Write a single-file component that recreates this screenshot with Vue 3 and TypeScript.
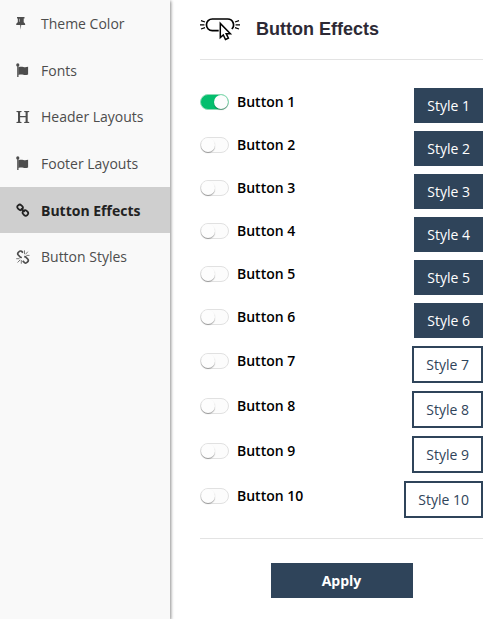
<script setup lang="ts">
import { ref } from 'vue'

type IconName = 'pin' | 'flag' | 'header' | 'link' | 'unlink'
interface MenuItem { label: string; icon: IconName }

const menu: MenuItem[] = [
  { label: 'Theme Color', icon: 'pin' },
  { label: 'Fonts', icon: 'flag' },
  { label: 'Header Layouts', icon: 'header' },
  { label: 'Footer Layouts', icon: 'flag' },
  { label: 'Button Effects', icon: 'link' },
  { label: 'Button Styles', icon: 'unlink' },
]
const activeItem = ref('Button Effects')
const selected = ref(1)
const effects = Array.from({ length: 10 }, (_, i) => ({ id: i + 1, outline: i >= 6 }))
</script>

<template>
  <div class="page">
    <nav class="sidebar">
      <a
        v-for="item in menu"
        :key="item.label"
        class="menu-item"
        :class="{ active: item.label === activeItem }"
        @click="activeItem = item.label"
      >
        <svg class="menu-icon" viewBox="0 0 14 14" fill="currentColor">
          <path v-if="item.icon === 'pin'" d="M1 1h7.500v1.500H7.700v3.800c.9.500 1.500 1.400 1.500 2.700H5.200L4.700 13.800 4.200 9H.2c0-1.300.6-2.200 1.600-2.700V2.500H1zM3.300 2.700v3.100h.5V2.700z" fill-rule="evenodd" />
          <g v-else-if="item.icon === 'flag'">
            <circle cx="1.800" cy="1.900" r="1.600" />
            <path d="M1.200 3h1.300v11H1.200z" />
            <path d="M2.300 4.200c2.100-.7 3.600-.6 5-.2 1.500.4 2.800.3 4.800-.2v7.700c-1.900.6-3.300.7-4.800.3-1.600-.4-3.200-.3-5 .1z" />
          </g>
          <path v-else-if="item.icon === 'header'" d="M.5 1h5v1l-1.400.3v3.800h5.500V2.300L8.200 2V1h5v1l-1.500.3v9.400l1.500.3v1h-5v-1l1.400-.3V7.200H4.100v4.500l1.400.3v1h-5v-1l1.500-.3V2.300L.5 2z" />
          <g v-else-if="item.icon === 'link'" fill="none" stroke="currentColor" stroke-width="1.750">
            <rect x="1.300" y="2" width="5.600" height="4.700" rx="2.200" transform="rotate(45 4.100 4.350)" />
            <rect x="6.600" y="7.600" width="5.600" height="4.700" rx="2.200" transform="rotate(45 9.400 9.950)" />
            <path d="M5 5.300l3.600 3.600" />
          </g>
          <g v-else fill="none" stroke="currentColor">
            <path stroke-width="1.700" d="M7 2.700L5.500 1.300Q4.200.5 2.800 1.800 1 3.300 2.100 4.800l2.300 2.500 1.500.2M6.700 10.900l1.800 1.700q1.300 1 2.800-.4 1.700-1.500.6-3L9.600 6.800 8.200 6.600" />
            <path stroke-width=".75" d="M8.500 4.100V.4M9.500 4.300l2.300-2.600M10.300 5.400h3.200M.2 8.700h3.300M4.200 9.800L1.600 12.500M5.300 10v3.700" />
          </g>
        </svg>
        <span>{{ item.label }}</span>
      </a>
    </nav>

    <main class="panel">
      <header class="panel-header">
        <svg class="logo" viewBox="0 0 40 26" fill="none" stroke="#000">
          <path stroke-width="1.700" d="M18.700 14.700H12.300a5.850 5.850 0 0 1 0-11.700h15.400a5.850 5.850 0 0 1 4.100 10" />
          <path stroke-width="1.300" d="M1 4.700l4 1.300M0 8.900h4.400M1 13l4-1.300M39 4.700l-4 1.300M40 8.900h-4.400M39 13l-4-1.300" />
          <path fill="#fff" stroke-width="1.500" stroke-linejoin="miter" d="M20.300 7.400v14.200l3-2.600 2.200 4.500 2.900-1.400-2.200-4.400h4.200z" />
        </svg>
        <h1>Button Effects</h1>
      </header>

      <div class="effects">
        <div v-for="effect in effects" :key="effect.id" class="effect-row">
          <label class="option" :class="{ 'option-outline': effect.outline }">
            <input v-model="selected" type="radio" name="effect" :value="effect.id">
            <span class="toggle" :class="{ on: selected === effect.id }"></span>
            <span class="option-name">Button {{ effect.id }}</span>
          </label>
          <button class="style-button" :class="{ outline: effect.outline }">Style {{ effect.id }}</button>
        </div>
      </div>

      <footer class="panel-footer">
        <button class="apply">Apply</button>
      </footer>
    </main>
  </div>
</template>

<style>
body {
  background: #fff;
  overflow: hidden;
}
</style>

<style scoped>
.page {
  display: flex;
  height: 619px;
  font-family: "Open Sans", "Noto Sans", sans-serif;
  font-size: 14px;
}
.sidebar {
  flex: 0 0 170px;
  box-sizing: border-box;
  padding-top: .15px;
  background: #f9f9f9;
  box-shadow: 1px 1px 3px rgba(0, 0, 0, .45);
}
.menu-item {
  display: flex;
  align-items: center;
  box-sizing: border-box;
  height: 46.670px;
  padding-left: 16px;
  color: #4d4d4d;
  cursor: pointer;
}
.menu-item.active {
  background: #cfcfcf;
  color: #222;
  font-weight: 700;
}
.menu-icon {
  width: 14px;
  height: 14px;
  margin-right: 11px;
}
.panel {
  flex: 1;
  padding: 0 10px 0 30px;
}
.panel-header {
  display: flex;
  align-items: center;
  box-sizing: border-box;
  height: 60px;
  padding-bottom: 2px;
  border-bottom: 1px solid #e3e3e3;
}
.logo {
  width: 40px;
  height: 26px;
  margin-top: 1px;
  margin-right: 16px;
}
h1 {
  margin: 0;
  color: #2d2a35;
  font: 700 18px/24px "Liberation Sans", Arial, sans-serif;
}
.effects {
  display: flex;
  flex-direction: column;
  gap: 8px;
  padding: 28px 0 20px;
}
.effect-row {
  display: flex;
  justify-content: space-between;
  align-items: flex-start;
}
.option {
  display: flex;
  align-items: center;
  height: 28px;
  color: #000;
  font-weight: 600;
  cursor: pointer;
}
.option-outline {
  height: 30px;
}
.option-name {
  line-height: 18px;
}
.option input {
  display: none;
}
.toggle {
  display: flex;
  box-sizing: border-box;
  width: 29px;
  height: 16px;
  margin-right: 8px;
  border: 1px solid #e1e1e1;
  border-radius: 8px;
  background: #fcfcfc;
}
.toggle::before {
  content: "";
  width: 14px;
  height: 14px;
  border-radius: 50%;
  background: #fdfdfd;
  box-shadow: 0 1px 1px rgba(0, 0, 0, .35);
}
.toggle.on {
  justify-content: flex-end;
  border-color: #8edbb5;
  background: #04be6d;
}
button {
  box-sizing: border-box;
  border: 0;
  border-radius: 0;
  background: #2f445a;
  color: #fff;
  font-family: inherit;
  font-size: 14px;
  cursor: pointer;
}
.style-button {
  height: 35px;
  padding: 0 13px;
}
.style-button.outline {
  height: 37px;
  padding: 0 12px;
  border: 2px solid #2f445a;
  background: #fff;
  color: #2f445a;
}
.panel-footer {
  display: flex;
  justify-content: center;
  padding-top: 24px;
  border-top: 1px solid #e3e3e3;
}
.apply {
  width: 142px;
  height: 35px;
  font-weight: 700;
}
</style>
